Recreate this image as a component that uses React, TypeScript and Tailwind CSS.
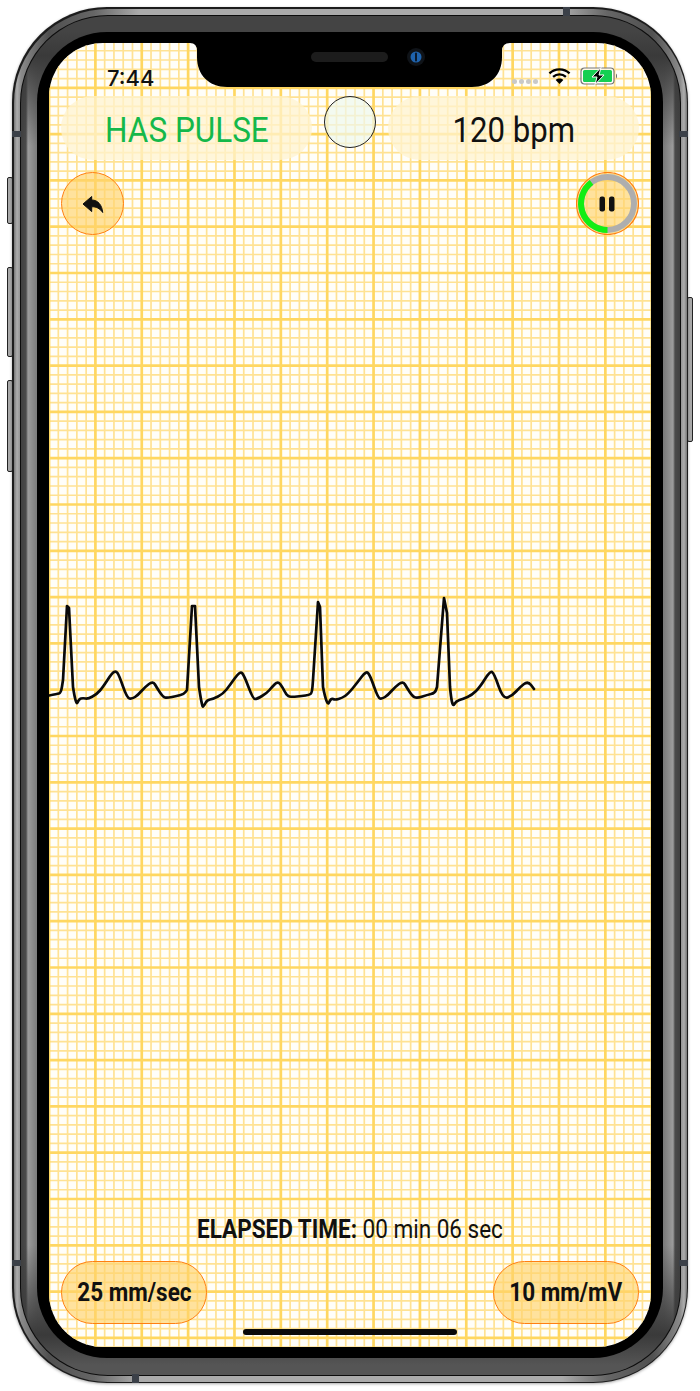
import { type FC } from "react";

const MINOR_X = 46.36 / 5;
const MINOR_Y = 46.3 / 5;
// first major lines, relative to the screen
const ORIGIN_X = 46.4 - 46.36;
const ORIGIN_Y = 44.8 - 46.3;

const ecg =
  "49,695.5 57,694 61,693 63,680 67,606 69,608 73,687 76,706 79,699 83,698 88,699 97,694 103,687 112,673 116,671 119,675 127,698 132,699 138,695 145,687 153,681 157,688 163,697 167,698 177,696 184,694 187,690 192,606 195,606 199,687 202,707 204,706 207,700 213,699 223,694 230,685 240,671 244,675 253,699 257,699 267,693 272,687 278,681 283,688 287,696 292,697 302,696 309,695 312,693 313,680 318,602 320,607 323,687 327,707 331,698 335,700 342,698 348,694 357,683 366,671 370,675 378,698 382,699 388,695 395,687 403,681 407,688 413,697 418,698 427,695 435,693 437,687 444,598 447,613 450,687 452,708 456,701 463,699 472,695 480,687 490,671 494,673 503,699 512,696 520,687 528,681 534,689";

// rounds the slow waves, keeps the R peaks sharp
const tracePath = () => {
  const pts = ecg.split(" ").map((p) => p.split(",").map(Number));
  let d = `M${pts[0][0]} ${pts[0][1]}`;
  for (let i = 1; i < pts.length - 1; i++) {
    const [x, y] = pts[i];
    const [nx, ny] = pts[i + 1];
    if (y < 660 || ny < 660 || pts[i - 1][1] < 660) d += ` L${x} ${y}`;
    else d += ` Q${x} ${y} ${(x + nx) / 2} ${(y + ny) / 2}`;
  }
  const last = pts[pts.length - 1];
  return `${d} L${last[0]} ${last[1]}`;
};

const GridPaper: FC = () => {
  const xs = Array.from({ length: 66 }, (_, i) => i);
  const ys = Array.from({ length: 142 }, (_, i) => i);
  return (
    <svg className="absolute inset-0" width={602} height={1304} aria-hidden>
      {xs.filter((i) => i % 5).map((i) => (
        <line key={i} x1={ORIGIN_X + i * MINOR_X} x2={ORIGIN_X + i * MINOR_X} y1={0} y2={1304} stroke="#ffe293" strokeWidth={1.7} />
      ))}
      {ys.filter((i) => i % 5).map((i) => (
        <line key={i} x1={0} x2={602} y1={ORIGIN_Y + i * MINOR_Y} y2={ORIGIN_Y + i * MINOR_Y} stroke="#ffe293" strokeWidth={1.7} />
      ))}
      {xs.filter((i) => i % 5 === 0).map((i) => (
        <line key={i} x1={ORIGIN_X + i * MINOR_X} x2={ORIGIN_X + i * MINOR_X} y1={0} y2={1304} stroke="#ffd761" strokeWidth={2.7} />
      ))}
      {ys.filter((i) => i % 5 === 0).map((i) => (
        <line key={i} x1={0} x2={602} y1={ORIGIN_Y + i * MINOR_Y} y2={ORIGIN_Y + i * MINOR_Y} stroke="#ffd761" strokeWidth={2.7} />
      ))}
    </svg>
  );
};

const Notch: FC = () => (
  <svg className="absolute left-0 top-0" width={602} height={46} aria-hidden>
    <path
      d="M141 0 Q148 0 148 8 L148 14 C148 32 160 44 178 44 L423 44 C441 44 453 32 453 14 L453 8 Q453 0 461 0 Z"
      fill="#000"
    />
    <rect x={262} y={9} width={77} height={10} rx={5} fill="#1c1c1c" />
    <circle cx={367} cy={14} r={9} fill="#0f1318" />
    <circle cx={367} cy={14} r={5.5} fill="#1f63ad" />
    <rect x={366} y={9.5} width={2} height={9} rx={1} fill="#0b1a2c" />
  </svg>
);

const StatusIcons: FC = () => (
  <div className="flex items-end">
    <div className="mb-[1px] mr-[10px] flex gap-[2px]">
      <span className="h-[5px] w-[5px] rounded-full bg-[#c9c9c9]" />
      <span className="h-[5px] w-[5px] rounded-full bg-[#c9c9c9]" />
      <span className="h-[5px] w-[5px] rounded-full bg-[#c9c9c9]" />
      <span className="h-[5px] w-[5px] rounded-full bg-[#c9c9c9]" />
    </div>
    <svg width={23} height={18} viewBox="0 0 24 18" className="mr-[9px]">
      <path d="M1.5 6.2 C7.5 0.6 16.5 0.6 22.5 6.2" fill="none" stroke="#000" strokeWidth={2.4} />
      <path d="M5.3 10 C9.2 6.3 14.8 6.3 18.7 10" fill="none" stroke="#000" strokeWidth={2.4} />
      <path d="M12 17.4 L8 13.2 C10.4 11.2 13.6 11.2 16 13.2 Z" fill="#000" />
    </svg>
    <svg width={38} height={18} viewBox="0 0 38 18">
      <rect x={1} y={1} width={33} height={16} rx={3.5} fill="#fff" fillOpacity={0.75} stroke="#777" strokeWidth={1.2} />
      <rect x={3} y={3} width={29} height={12} rx={1.5} fill="#14cf52" />
      <path d="M36 6.5 C37.2 7.2 37.2 10.8 36 11.5 Z" fill="#555" />
      <path d="M21 0.5 L12 10 H17 L15 17.5 L24 8 H19 Z" fill="#000" stroke="#fff" strokeWidth={1} />
    </svg>
  </div>
);

const PauseRing: FC = () => (
  <svg width={63} height={63} viewBox="0 0 63 63" className="absolute inset-0">
    <circle cx={31.5} cy={31.5} r={31} fill="#ffd26b" fillOpacity={0.65} stroke="#ff7f11" strokeWidth={1.2} />
    <circle cx={31.5} cy={31.5} r={26.5} fill="none" stroke="#aeaeae" strokeWidth={6} />
    <path d="M31.5 58 A26.5 26.5 0 0 1 15.5 10.4" fill="none" stroke="#13ee13" strokeWidth={6} />
    <rect x={23.5} y={24.5} width={5.5} height={15} rx={2.2} fill="#111" />
    <rect x={33} y={24.5} width={5.5} height={15} rx={2.2} fill="#111" />
  </svg>
);

const BackIcon: FC = () => (
  <svg width={24} height={20} viewBox="81 194 24 20" aria-hidden>
    <path
      d="M83 204 L91.7 196.5 V200 C98 200 102 205 102.7 212.5 C100 208.5 96 206.5 91.7 206.8 V211.6 Z"
      fill="#111"
      stroke="#111"
      strokeWidth={1}
      strokeLinejoin="round"
    />
  </svg>
);

const SideButton: FC<{ className: string }> = ({ className }) => (
  <div className={`absolute w-[6px] rounded-[2px] border border-[#222] bg-[#a9a9a9] ${className}`} />
);

const Band: FC<{ className: string }> = ({ className }) => (
  <div className={`absolute bg-[#3b4048] ${className}`} />
);

export default function App() {
  return (
    <div className="relative h-[1391px] w-[700px] overflow-hidden bg-white pl-[12px] pt-[7px] font-['Roboto',sans-serif] text-[#111]">
      <SideButton className="left-[7px] top-[177px] h-[47px]" />
      <SideButton className="left-[7px] top-[267px] h-[90px]" />
      <SideButton className="left-[7px] top-[380px] h-[92px]" />
      <SideButton className="left-[687px] top-[297px] h-[145px]" />

      {/* phone body */}
      <div className="relative h-[1376px] w-[676px] rounded-[95px] bg-[#1c1c1c] p-[1.5px] shadow-[0_1px_3px_rgba(0,0,0,0.35)]">
        <div className="h-full w-full rounded-[94px] bg-[linear-gradient(90deg,#777,#adadad_3px,#8a8a8a_7px,#505050_35px,#666_80px,#ababab_125px,#ababab_calc(100%-125px),#666_calc(100%-80px),#505050_calc(100%-35px),#8a8a8a_calc(100%-7px),#adadad_calc(100%-3px),#777)] p-[6px]">
          <div className="h-full w-full rounded-[88px] bg-[#0c0c0c] p-[1px]">
            <div className="h-full w-full rounded-[87px] bg-[linear-gradient(180deg,#444_15px,#3a3a3a_40px,transparent_130px,transparent_calc(100%-130px),#3a3a3a_calc(100%-40px),#555_calc(100%-10px)),linear-gradient(90deg,#404040,#4a4a4a_5px,#9c9c9c_7px,#7c7c7c_16px,#4a4a4a_60px,#4a4a4a_calc(100%-60px),#7c7c7c_calc(100%-16px),#9c9c9c_calc(100%-7px),#4a4a4a_calc(100%-5px),#404040)] p-[16.5px]">
              <div className="h-full w-full rounded-[70px] bg-black px-[12px] py-[11px]">
                {/* screen */}
                <div className="relative h-[1304px] w-[602px] overflow-hidden rounded-[54px] bg-[#fffef9]">
                  <GridPaper />
                  <div className="relative flex h-full flex-col">
                    <div className="flex h-[53px] items-start justify-between pl-[58px] pr-[33px] pt-[24px]">
                      <span className="font-['Inter',sans-serif] text-[22px] font-medium leading-[22px]">7:44</span>
                      <StatusIcons />
                    </div>

                    <div className="flex h-[64px] items-start gap-[12px] px-[12px]">
                      <div className="flex h-[64px] w-[251px] items-center justify-center rounded-full bg-[#fff3cf]/75 pt-[5px]">
                        <span className="scale-x-[0.9] text-[35px] leading-none text-[#14b84a]">HAS PULSE</span>
                      </div>
                      <div className="h-[52px] w-[52px] rounded-full border border-[#222] bg-[#eef8ee]/70" />
                      <div className="flex h-[64px] w-[251px] items-center justify-center rounded-full bg-[#fff3cf]/75 pt-[4px]">
                        <span className="scale-x-[0.89] text-[35px] leading-none">120 bpm</span>
                      </div>
                    </div>

                    <div className="mt-[12px] flex justify-between px-[12px]">
                      <button className="flex h-[63px] w-[63px] items-center justify-center rounded-full border-[1.5px] border-[#ff7f11] bg-[#ffd26b]/65">
                        <BackIcon />
                      </button>
                      <button className="relative h-[63px] w-[63px]">
                        <PauseRing />
                      </button>
                    </div>

                    {/* trace */}
                    <svg className="mt-[355px]" width={602} height={130} viewBox="49 590 602 130">
                      <path d={tracePath()} fill="none" stroke="#0a0a0a" strokeWidth={2.7} strokeLinejoin="round" strokeLinecap="round" />
                    </svg>

                    <div className="mt-auto translate-y-[1px] text-center text-[25px] leading-[28px]">
                      <span className="inline-block scale-x-[0.9] whitespace-nowrap">
                        <b className="font-bold">ELAPSED TIME:</b> 00 min 06 sec
                      </span>
                    </div>

                    <div className="mb-[23px] mt-[18px] flex justify-between px-[12px]">
                      <button className="flex h-[63px] w-[146px] items-center justify-center rounded-full border-[1.5px] border-[#ff7f11] bg-[#ffd26b]/65">
                        <span className="scale-x-[0.9] whitespace-nowrap text-[25px] font-bold">25 mm/sec</span>
                      </button>
                      <button className="flex h-[63px] w-[146px] items-center justify-center rounded-full border-[1.5px] border-[#ff7f11] bg-[#ffd26b]/65">
                        <span className="scale-x-[0.9] whitespace-nowrap text-[25px] font-bold">10 mm/mV</span>
                      </button>
                    </div>
                  </div>
                  <Notch />
                  <div className="absolute bottom-[12px] left-[194px] h-[6px] w-[214px] rounded-full bg-[#0a0a0a]" />
                </div>
              </div>
            </div>
          </div>
        </div>
        <Band className="left-0 top-[124px] h-[6px] w-[9px]" />
        <Band className="left-0 top-[1253px] h-[6px] w-[9px]" />
        <Band className="right-0 top-[124px] h-[6px] w-[9px]" />
        <Band className="right-0 top-[1253px] h-[6px] w-[9px]" />
        <Band className="left-[551px] top-0 h-[9px] w-[7px]" />
        <Band className="bottom-0 left-[120px] h-[9px] w-[7px]" />
      </div>
    </div>
  );
}
